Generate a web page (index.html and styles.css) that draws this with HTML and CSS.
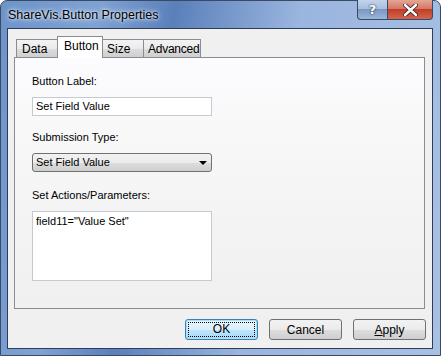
FILE: index.html
```html
<!DOCTYPE html>
<html lang="en">
<head>
    <meta charset="UTF-8">
    <title>ShareVis.Button Properties</title>
    <link rel="stylesheet" href="styles.css">
</head>
<body>
    <div class="window">
        <!-- Title bar -->
        <div class="titlebar">
            <span class="title">ShareVis.Button Properties</span>
            <div class="caption-btns">
                <div class="cap-btn help">?</div>
                <div class="cap-btn close">
                    <svg width="15" height="12" viewBox="0 0 15 12">
                        <path d="M2 1 L13 11 M13 1 L2 11" stroke="#3a2020" stroke-width="4.2" stroke-linecap="round"/>
                        <path d="M2 1 L13 11 M13 1 L2 11" stroke="#ffffff" stroke-width="2.4" stroke-linecap="round"/>
                    </svg>
                </div>
            </div>
        </div>

        <div class="client">
            <!-- Tabs -->
            <div class="tabs">
                <div class="tab tab-data">Data</div>
                <div class="tab selected">Button</div>
                <div class="tab after-sel">Size</div>
                <div class="tab tab-adv">Advanced</div>
            </div>

            <div class="panel">
                <div class="field-label">Button Label:</div>
                <div class="textbox">Set Field Value</div>

                <div class="field-label">Submission Type:</div>
                <div class="combo">
                    <span>Set Field Value</span>
                    <span class="arrow"></span>
                </div>

                <div class="field-label label-actions">Set Actions/Parameters:</div>
                <div class="textarea">field11="Value Set"</div>
            </div>

            <div class="buttons">
                <div class="btn default"><span class="focus">OK</span></div>
                <div class="btn">Cancel</div>
                <div class="btn"><span><u>A</u>pply</span></div>
            </div>
        </div>
    </div>
</body>
</html>
```

FILE: styles.css
```css
body {
    margin: 0;
    padding: 0;
    background: #ffffff;
}
.window {
    width: 441px;
    height: 356px;
    box-sizing: border-box;
    border: 1px solid #3b4a63;
    border-radius: 7px 7px 0 0;
    background: linear-gradient(100deg, #6d93c9 0%, #7fa2d3 20%, #5a80bb 35%, #9ab5de 60%, #a8c0e4 100%);
    display: flex;
    flex-direction: column;
    padding: 0 7px 6px 6px;
}
.titlebar {
    height: 27px;
    display: flex;
    justify-content: space-between;
    align-items: flex-start;
    flex-shrink: 0;
}
.title {
    font-family: "Liberation Sans", Arial, sans-serif;
    font-size: 12.5px;
    color: #000;
    margin-top: 7px;
    margin-left: 1px;
    text-shadow: 0 0 6px rgba(255,255,255,0.9), 0 0 3px rgba(255,255,255,0.9);
}
.caption-btns {
    display: flex;
    margin-top: -1px;
    margin-right: 0;
}
.cap-btn {
    height: 19px;
    border: 1px solid #3b4a63;
    border-top: none;
    display: flex;
    align-items: center;
    justify-content: center;
    box-sizing: content-box;
}
.help {
    width: 29px;
    border-radius: 0 0 0 4px;
    border-right: none;
    background: linear-gradient(#c3d3ea 0%, #a9bfdf 45%, #7b97c3 50%, #9cb5d9 100%);
    color: #fff;
    font-family: "DejaVu Sans", sans-serif;
    font-weight: bold;
    font-size: 13px;
    text-shadow: 0 0 2px #28354c, 0 0 1px #28354c;
}
.close {
    width: 44px;
    border-radius: 0 0 4px 0;
    background: linear-gradient(#e5a595 0%, #d47766 45%, #c13f28 50%, #d2664d 100%);
}
.client {
    flex: 1;
    border: 1px solid #2f3d58;
    background: #f0f0f0;
    display: flex;
    flex-direction: column;
    padding: 0 7px 7px 6px;
}
.tabs {
    display: flex;
    align-items: flex-end;
    height: 28px;
    padding-left: 2px;
    position: relative;
    z-index: 1;
}
.tab {
    font-family: "Liberation Sans", Arial, sans-serif;
    font-size: 12px;
    height: 17px;
    line-height: 19px;
    padding: 0 0 0 5px;
    border: 1px solid #898c95;
    border-bottom: none;
    border-right: none;
    background: linear-gradient(#f3f3f3, #ebebeb 50%, #dddddd 51%, #cfcfcf);
    color: #000;
    box-sizing: content-box;
    white-space: nowrap;
}
.tab-data {
    width: 35px;
}
.tab.selected {
    background: #ffffff;
    width: 38px;
    height: 21px;
    line-height: 18px;
    padding: 0 0 0 6px;
    margin-bottom: -1px;
    border-right: 1px solid #898c95;
}
.tab.after-sel {
    border-left: none;
    width: 36px;
    padding-left: 4px;
}
.tab-adv {
    width: 52px;
    padding-left: 4px;
    letter-spacing: -0.25px;
    border-right: 1px solid #898c95;
}
.panel {
    height: 250px;
    border: 1px solid #898c95;
    background: linear-gradient(#fcfcfe, #f4f4f4 60%, #f0f0f0);
    padding: 0 0 0 17px;
    display: flex;
    flex-direction: column;
    font-family: "Liberation Sans", Arial, sans-serif;
    font-size: 11px;
    color: #000;
}
.field-label {
    margin-top: 15px;
    height: 13px;
    line-height: 13px;
}
.field-label + .textbox,
.field-label + .combo,
.field-label + .textarea {
    margin-top: 9px;
}
.panel .field-label:first-child {
    margin-top: 17px;
}
.panel .label-actions {
    margin-top: 17px;
}
.textbox {
    height: 17px;
    line-height: 17px;
    border: 1px solid #c5cad2;
    background: #ffffff;
    padding-left: 3px;
    box-sizing: content-box;
    width: 175px;
}
.combo {
    width: 171px;
    height: 17px;
    line-height: 17px;
    border: 1px solid #707070;
    border-radius: 3px;
    background: linear-gradient(#f2f2f2, #ebebeb 50%, #dddddd 51%, #cfcfcf);
    padding: 0 4px 0 3px;
    display: flex;
    justify-content: space-between;
    align-items: center;
}
.arrow {
    width: 0;
    height: 0;
    border-left: 4px solid transparent;
    border-right: 4px solid transparent;
    border-top: 4px solid #000;
    margin-top: 1px;
}
.textarea {
    width: 175px;
    height: 65px;
    border: 1px solid #c5cad2;
    background: #ffffff;
    padding: 3px 0 0 3px;
    line-height: 13px;
}
.buttons {
    display: flex;
    justify-content: flex-end;
    gap: 11px;
    margin-top: 10px;
    margin-right: -1px;
}
.btn {
    width: 71px;
    height: 19px;
    border: 1px solid #707070;
    border-radius: 3px;
    background: linear-gradient(#f2f2f2, #ebebeb 50%, #dddddd 51%, #cfcfcf);
    font-family: "Liberation Sans", Arial, sans-serif;
    font-size: 12px;
    color: #000;
    display: flex;
    align-items: center;
    justify-content: center;
}
.btn.default {
    border-color: #3c7fb1;
    background: linear-gradient(#eaf6fd, #d9f0fc 50%, #bee6fd 51%, #a7d9f5);
    box-shadow: inset 0 0 0 1px #a9e0f9;
}
.focus {
    width: 65px;
    height: 13px;
    line-height: 13px;
    text-align: center;
    border: 1px dotted #000;
}
```
